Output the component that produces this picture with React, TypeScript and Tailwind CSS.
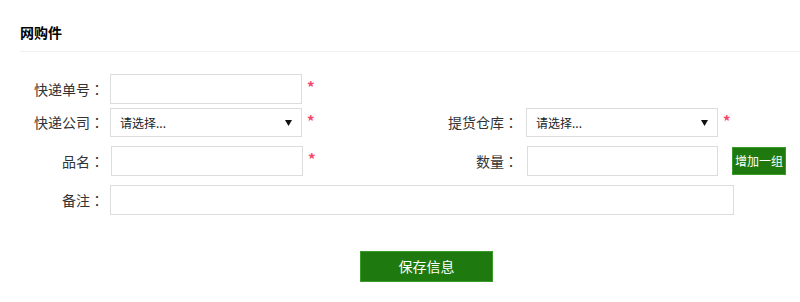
const font = {
  fontFamily: '"Noto Sans CJK SC", "Liberation Sans", sans-serif',
};

const Star = () => (
  <span className="ml-[5px] -mt-[5px] text-[15px] font-bold leading-none text-[#f5456a]">*</span>
);

// centered full-width colon like the original page
const Label = ({ text, className }: { text: string; className: string }) => (
  <label className={className}>
    {text}
    <span className="font-['Noto_Sans_CJK_JP']">：</span>
  </label>
);

const Select = () => (
  <div className="flex items-center justify-between h-[29px] w-[192px] border border-[#dcdcdc] bg-white pl-[9px] pr-[9px] text-[12px] text-[#222]">
    <span>请选择...</span>
    <svg width="7" height="6" viewBox="0 0 7 6">
      <path d="M0 0 H7 L3.5 6 Z" fill="#111" />
    </svg>
  </div>
);

const App = () => {
  return (
    <div className="w-[800px] h-[302px] bg-white text-[#333]" style={font}>
      <div className="ml-[20px] pt-[22px] pb-[8px] border-b border-[#f0f0f0]">
        <h2 className="text-[14px] leading-[21px] font-bold text-black">网购件</h2>
      </div>

      <div className="mt-[22px] flex flex-col text-[14px]">
        {/* 快递单号 */}
        <div className="flex items-center h-[30px]">
          <Label text="快递单号" className="w-[104px] text-right" />
          <input className="ml-[6px] h-[30px] w-[192px] border border-[#dcdcdc] outline-none" />
          <Star />
        </div>

        {/* 快递公司 / 提货仓库 */}
        <div className="mt-[4px] flex items-center h-[29px]">
          <div className="flex items-center w-[410px]">
            <Label text="快递公司" className="w-[104px] text-right" />
            <div className="ml-[6px]">
              <Select />
            </div>
            <Star />
          </div>
          <Label text="提货仓库" className="w-[108px] text-right" />
          <div className="ml-[8px]">
            <Select />
          </div>
          <Star />
        </div>

        {/* 品名 / 数量 */}
        <div className="mt-[9px] flex items-center h-[30px]">
          <div className="flex items-center w-[410px]">
            <Label text="品名" className="w-[104px] text-right" />
            <input className="ml-[7px] h-[30px] w-[192px] border border-[#dcdcdc] outline-none" />
            <Star />
          </div>
          <Label text="数量" className="w-[108px] text-right" />
          <input className="ml-[9px] h-[30px] w-[191px] border border-[#dcdcdc] outline-none" />
          <button className="ml-[14px] h-[28px] w-[54px] border border-[#3c9a2c] bg-[#1e7a0e] text-[12px] text-white">
            增加一组
          </button>
        </div>

        {/* 备注 */}
        <div className="mt-[9px] flex items-center h-[30px]">
          <Label text="备注" className="w-[104px] text-right" />
          <input className="ml-[6px] h-[30px] w-[624px] border border-[#dcdcdc] outline-none" />
        </div>
      </div>

      <div className="mt-[36px] flex">
        <button className="ml-[360px] h-[31px] w-[133px] border border-[#3c9a2c] bg-[#1e7a0e] text-[14px] text-white">
          保存信息
        </button>
      </div>
    </div>
  );
};

export default App;
